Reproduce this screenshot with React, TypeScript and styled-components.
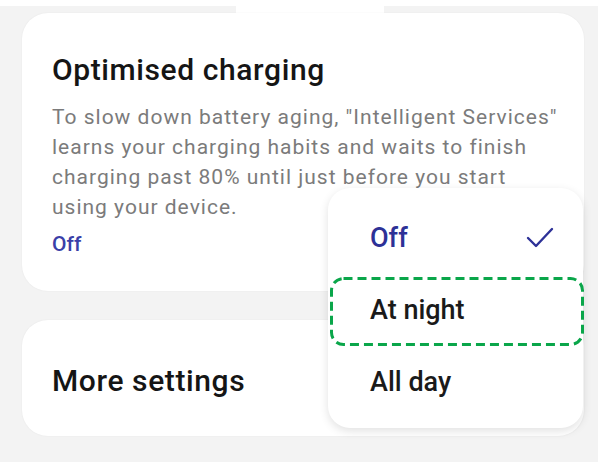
import React from "react";
import styled, { createGlobalStyle } from "styled-components";

const Global = createGlobalStyle`
  html, body { margin: 0; padding: 0; background: #f4f4f4; }
  body { font-family: Roboto, "Noto Sans", Arial, sans-serif; }
`;

const Page = styled.div`
  position: relative;
  width: 598px;
  height: 465px;
  background: #f3f3f3;
  overflow: hidden;
  display: flex;
  flex-direction: column;
`;

const TopBar = styled.div`
  display: flex;
  height: 13px;
  background: #ffffff;
`;

const TopSeg = styled.div<{ $w?: number; $white?: boolean }>`
  ${(p) => (p.$w ? `width: ${p.$w}px;` : "flex: 1;")}
  margin-top: ${(p) => (p.$white ? 0 : 6)}px;
  background: ${(p) => (p.$white ? "#ffffff" : "#f3f3f3")};
`;

const BottomBar = styled.div`
  margin-top: auto;
  height: 3px;
  background: #ffffff;
`;

const Stack = styled.div`
  display: flex;
  flex-direction: column;
  gap: 29px;
  padding: 0 14px 0 22px;
`;

const Card = styled.div<{ $h: number }>`
  height: ${(p) => p.$h}px;
  box-sizing: border-box;
  background: #ffffff;
  border-radius: 26px;
  box-shadow: 0 0 2px rgba(0, 0, 0, 0.06);
  padding: 0 22px 0 30px;
`;

const InfoCard = styled(Card)`
  padding-top: 40px;
`;

const SettingsCard = styled(Card)`
  display: flex;
  align-items: center;
  padding-top: 6px;
`;

const Title = styled.div`
  font-size: 30px;
  font-weight: 500;
  color: #151515;
  line-height: 34px;
  letter-spacing: 0.6px;
`;

const Desc = styled.div`
  margin-top: 15px;
  font-size: 21px;
  line-height: 30px;
  letter-spacing: 1px;
  color: #7b7b7b;
`;

const Status = styled.div`
  margin-top: 7px;
  font-size: 21px;
  line-height: 30px;
  color: #3a3fa8;
  font-weight: 500;
`;

const Menu = styled.div`
  position: absolute;
  left: 328px;
  top: 188px;
  width: 255px;
  height: 240px;
  box-sizing: border-box;
  background: #ffffff;
  border-radius: 22px;
  box-shadow: 0 3px 10px rgba(0, 0, 0, 0.12);
  display: flex;
  flex-direction: column;
  padding-top: 14px;
`;

const Item = styled.div<{ $active?: boolean }>`
  position: relative;
  height: 72px;
  display: flex;
  align-items: center;
  justify-content: space-between;
  padding: 0 28px 0 42px;
  font-size: 27px;
  font-weight: 500;
  color: ${(p) => (p.$active ? "#2d3197" : "#1a1a1a")};
`;

const Highlight = styled.svg`
  position: absolute;
  left: 0;
  top: 3px;
  width: 256px;
  height: 70px;
  overflow: visible;
`;

export default function App() {
  return (
    <Page>
      <Global />
      <TopBar>
        <TopSeg $w={236} />
        <TopSeg $w={148} $white />
        <TopSeg />
      </TopBar>
      <Stack>
        <InfoCard $h={278}>
          <Title>Optimised charging</Title>
          <Desc>
            To slow down battery aging, "Intelligent Services" learns your charging habits and waits to finish
            charging past 80% until just before you start using your device.
          </Desc>
          <Status>Off</Status>
        </InfoCard>
        <SettingsCard $h={116}>
          <Title>More settings</Title>
        </SettingsCard>
      </Stack>
      <BottomBar />
      <Menu>
        <Item $active>
          Off
          <svg width="30" height="22" viewBox="0 0 30 22">
            <path d="M3 11 L11 19 L27 2" fill="none" stroke="#2d3197" strokeWidth="2.4" strokeLinecap="round" strokeLinejoin="round" />
          </svg>
        </Item>
        <Item>
          At night
          <Highlight viewBox="0 0 256 70">
            <rect x="3.5" y="1.5" width="251" height="66" rx="12" fill="none" stroke="#0aa64a" strokeWidth="3" strokeDasharray="9 5" />
          </Highlight>
        </Item>
        <Item>All day</Item>
      </Menu>
    </Page>
  );
}
